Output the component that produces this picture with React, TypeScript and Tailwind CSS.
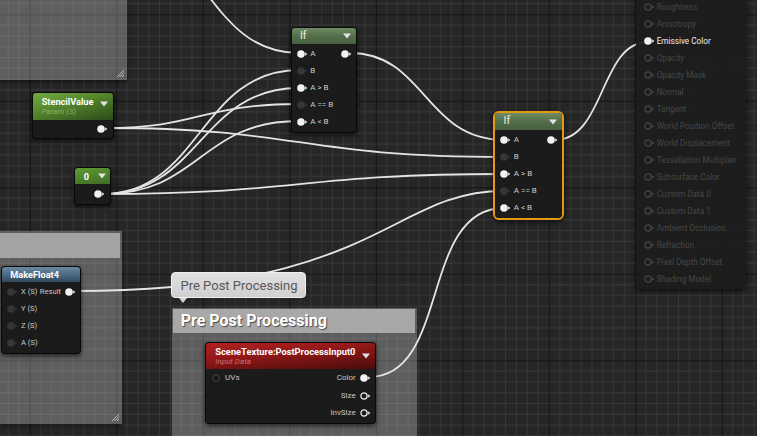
import React from 'react';

type PinKind = 'on' | 'off' | 'hollow' | 'mat' | 'uv';

const Pin = ({ kind }: { kind: PinKind }) => {
  const fill = kind === 'on' ? '#f2f2f2' : kind === 'off' ? '#363636' : 'none';
  const stroke = kind === 'hollow' ? '#e6e6e6' : kind === 'mat' ? '#464646' : kind === 'uv' ? '#3a3a3a' : 'none';
  const arrow = kind === 'on' || kind === 'hollow' ? '#f2f2f2' : kind === 'mat' ? '#464646' : kind === 'off' ? '#363636' : 'none';
  return (
    <svg width="12" height="8" viewBox="0 0 12 8" className="shrink-0">
      {kind === 'on' || kind === 'off' ? (
        <circle cx="4" cy="4" r="3.8" fill={fill} />
      ) : (
        <circle cx="4" cy="4" r="3.1" fill={kind === 'uv' ? '#161616' : 'none'} stroke={stroke} strokeWidth="1.3" />
      )}
      <path d="M8.2 2.3 L10.3 4 L8.2 5.7 Z" fill={arrow} />
    </svg>
  );
};

const Drop = () => (
  <svg width="8" height="6" viewBox="0 0 8 6" className="shrink-0">
    <path d="M0 0.5 H8 L4 5.5 Z" fill="#e2e2e2" />
  </svg>
);

const Grip = () => (
  <svg width="10" height="10" viewBox="0 0 10 10" className="absolute right-[2px] bottom-[2px]">
    <path d="M9 2 L2 9 M9 4.5 L4.5 9 M9 7 L7 9" stroke="#c8c8c8" strokeWidth="0.9" />
  </svg>
);

const ifRows = [
  { label: 'A', kind: 'on' as PinKind, out: true },
  { label: 'B', kind: 'off' as PinKind },
  { label: 'A > B', kind: 'on' as PinKind },
  { label: 'A == B', kind: 'off' as PinKind },
  { label: 'A < B', kind: 'on' as PinKind },
];

const IfBody = ({ header }: { header: string }) => (
  <>
    <div className={`flex items-center justify-between pl-[8.3px] pr-[5.3px] ${header} bg-[linear-gradient(180deg,#6f8c63_0%,#56714c_45%,#465f3f_100%)]`}>
      <span className="text-[10.5px] text-[#f0f0f0] leading-none">If</span>
      <Drop />
    </div>
    <div className="pt-[1.5px] pb-px">
      {ifRows.map((r) => (
        <div key={r.label} className="flex items-center h-[17px] pl-[5px] pr-[3.3px]">
          <Pin kind={r.kind} />
          <span className="ml-[1.5px] text-[8px] text-[#cfcfcf] leading-none">{r.label}</span>
          {r.out && (
            <span className="ml-auto">
              <Pin kind="on" />
            </span>
          )}
        </div>
      ))}
    </div>
  </>
);

const matRows = [
  'Roughness',
  'Anisotropy',
  'Emissive Color',
  'Opacity',
  'Opacity Mask',
  'Normal',
  'Tangent',
  'World Position Offset',
  'World Displacement',
  'Tessellation Multiplier',
  'Subsurface Color',
  'Custom Data 0',
  'Custom Data 1',
  'Ambient Occlusion',
  'Refraction',
  'Pixel Depth Offset',
  'Shading Model',
];

const wires = [
  'M 110 -70 C 205 -70, 205 53, 299 53',
  'M 103 194 C 200 194, 200 70, 299 70',
  'M 103 194 C 200 194, 200 88, 299 88',
  'M 106 128 C 200 128, 200 104, 299 104',
  'M 103 194 C 200 194, 200 121, 299 121',
  'M 106 128 C 300 128, 300 157, 504 157',
  'M 103 194 C 300 194, 300 174, 504 174',
  'M 350 53 C 425 53, 425 140, 504 140',
  'M 74 291 C 380 291, 390 191, 504 191',
  'M 369 377 C 450 377, 420 208, 504 208',
  'M 555 140 C 605 140, 600 42, 648 42',
];

const nodeBox = 'absolute rounded-[4px] overflow-hidden bg-[#1a1b1a] border border-black/70 shadow-[0_2px_5px_rgba(0,0,0,0.65)]';

export default function App() {
  const minor = Array.from({ length: 7 }, (_, i) => (i + 1) * 10.8125);
  return (
    <div className="relative w-[757px] h-[436px] overflow-hidden bg-[#262626] font-['Roboto',sans-serif]">
      {/* grid */}
      <svg className="absolute inset-0" width="757" height="436">
        <defs>
          <pattern id="grid" x="29.8" y="14.3" width="86.5" height="86.5" patternUnits="userSpaceOnUse">
            <rect width="86.5" height="86.5" fill="#262626" />
            {minor.map((m) => (
              <g key={m}>
                <line x1={m} y1="0" x2={m} y2="86.5" stroke="#373737" strokeWidth="1" />
                <line x1="0" y1={m} x2="86.5" y2={m} stroke="#373737" strokeWidth="1" />
              </g>
            ))}
            <line x1="0.5" y1="0" x2="0.5" y2="86.5" stroke="#141414" strokeWidth="1" />
            <line x1="0" y1="0.5" x2="86.5" y2="0.5" stroke="#141414" strokeWidth="1" />
          </pattern>
        </defs>
        <rect width="757" height="436" fill="url(#grid)" />
      </svg>

      {/* comment boxes */}
      <div className="absolute left-0 top-0 w-[127px] h-[80px] bg-[rgba(255,255,255,0.26)] shadow-[0_2px_4px_rgba(0,0,0,0.5)]">
        <Grip />
      </div>
      <div className="absolute left-0 top-[231px] w-[122px] h-[193px] bg-[rgba(255,255,255,0.26)] shadow-[0_2px_4px_rgba(0,0,0,0.5)]">
        <div className="mt-[2px] mr-[2px] h-[25px] bg-[#a3a3a3]" />
        <Grip />
      </div>
      <div className="absolute left-[171.7px] top-[307.7px] w-[245px] h-[140px] bg-[rgba(255,255,255,0.26)]">
        <div className="mx-[1.5px] mt-[1.5px] h-[24px] bg-[#a8a8a8] flex items-center pl-[7.5px]">
          <span className="text-[16px] font-bold text-white leading-none [text-shadow:1px_1px_1px_rgba(0,0,0,0.55)]">
            Pre Post Processing
          </span>
        </div>
      </div>

      {/* wires */}
      <svg className="absolute inset-0 pointer-events-none" width="757" height="436">
        {wires.map((d) => (
          <path key={d} d={d} fill="none" stroke="#e4e4e4" strokeWidth="1.8" />
        ))}
      </svg>

      {/* StencilValue */}
      <div className={`${nodeBox} left-[32.3px] top-[92.3px] w-[82px]`}>
        <div className="relative h-[26.7px] pl-[8.4px] pt-[3px] bg-[linear-gradient(165deg,#72aa40_0%,#56892d_40%,#2c4a1b_100%)]">
          <div className="text-[9.2px] font-bold text-white leading-[11px]">StencilValue</div>
          <div className="text-[8px] italic text-[#86ad63] leading-[10px]">Param (3)</div>
          <span className="absolute right-[5.3px] top-[8px]">
            <Drop />
          </span>
        </div>
        <div className="h-[17.7px] flex items-center justify-end pr-[4.6px]">
          <Pin kind="on" />
        </div>
      </div>

      {/* 0 constant */}
      <div className={`${nodeBox} left-[74.3px] top-[167.3px] w-[36.7px]`}>
        <div className="h-[16px] flex items-center justify-between pl-[8.5px] pr-[3.5px] bg-[linear-gradient(170deg,#5f9a33_0%,#3f6d24_100%)]">
          <span className="text-[9.2px] font-bold text-white leading-none">0</span>
          <Drop />
        </div>
        <div className="h-[19.4px] flex items-center justify-end pr-[4px]">
          <Pin kind="on" />
        </div>
      </div>

      {/* If 1 */}
      <div className={`${nodeBox} left-[290.7px] top-[26.7px] w-[66.6px]`}>
        <IfBody header="h-[16.6px]" />
      </div>

      {/* If 2 (selected) */}
      <div className="absolute left-[493.3px] top-[111px] w-[70.7px] rounded-[6px] border-2 border-[#e29a12] shadow-[0_2px_5px_rgba(0,0,0,0.65)]">
        <div className="rounded-[4px] overflow-hidden bg-[#1a1b1a]">
          <IfBody header="h-[17px]" />
        </div>
      </div>

      {/* Material result */}
      <div className="absolute left-[635.7px] top-[-10px] w-[110px] pt-[8.8px] pb-[1.2px] rounded-[4px] bg-[#1b1c1b]/95 shadow-[0_2px_5px_rgba(0,0,0,0.65)]">
        {matRows.map((m) => {
          const on = m === 'Emissive Color';
          return (
            <div key={m} className="flex items-center h-[17px] pl-[8.6px]">
              <Pin kind={on ? 'on' : 'mat'} />
              <span className={`ml-[0.4px] text-[8.2px] leading-none whitespace-nowrap ${on ? 'text-[#f0f0f0]' : 'text-[#474747]'}`}>
                {m}
              </span>
            </div>
          );
        })}
      </div>

      {/* MakeFloat4 */}
      <div className={`${nodeBox} left-[1px] top-[265.7px] w-[80px]`}>
        <div className="h-[15.3px] flex items-center pl-[8.3px] bg-[linear-gradient(180deg,#6a8aa3_0%,#4c6a82_50%,#314a5c_100%)]">
          <span className="text-[9.2px] font-bold text-white leading-none">MakeFloat4</span>
        </div>
        <div className="pt-[1.5px] pb-[1.2px]">
          {['X (S)', 'Y (S)', 'Z (S)', 'A (S)'].map((l, i) => (
            <div key={l} className="flex items-center h-[17px] pl-[5.3px] pr-[3px]">
              <Pin kind="off" />
              <span className="ml-[1.7px] text-[7.6px] text-[#c8c8c8] leading-none whitespace-nowrap">{l}</span>
              {i === 0 && (
                <>
                  <span className="ml-auto mr-[4px] text-[7.6px] text-[#c8c8c8] leading-none">Result</span>
                  <Pin kind="on" />
                </>
              )}
            </div>
          ))}
        </div>
      </div>

      {/* SceneTexture */}
      <div className={`${nodeBox} left-[205.3px] top-[341.7px] w-[170.7px]`}>
        <div className="relative h-[26px] pl-[9px] pt-[3px] bg-[linear-gradient(175deg,#b02222_0%,#8e1717_45%,#4a0c0c_100%)]">
          <div className="text-[9.3px] font-bold text-white leading-[11px]">SceneTexture:PostProcessInput0</div>
          <div className="text-[8px] italic text-[#d06a6a] leading-[10px]">Input Data</div>
          <span className="absolute right-[4.7px] top-[10px]">
            <Drop />
          </span>
        </div>
        <div className="pt-px pb-[1.1px]">
          {[
            { l: 'Color', k: 'on' as PinKind, uv: true },
            { l: 'Size', k: 'hollow' as PinKind },
            { l: 'InvSize', k: 'hollow' as PinKind },
          ].map((r) => (
            <div key={r.l} className="flex items-center h-[17.3px] pl-[5.3px] pr-[3.3px]">
              {r.uv && (
                <>
                  <Pin kind="uv" />
                  <span className="ml-[1.5px] text-[8px] text-[#c8c8c8] leading-none">UVs</span>
                </>
              )}
              <span className="ml-auto mr-[4px] text-[8px] text-[#c8c8c8] leading-none">{r.l}</span>
              <Pin kind={r.k} />
            </div>
          ))}
        </div>
      </div>

      {/* comment bubble */}
      <div className="absolute left-[171px] top-[272.3px] w-[134.7px] h-[26px] rounded-[4px] border border-[#efefef] bg-[linear-gradient(180deg,#e0e0e0,#d0d0d0)] flex items-center pl-[8.5px]">
        <span className="text-[13px] text-[#585858] leading-none whitespace-nowrap">Pre Post Processing</span>
        <svg width="8" height="6" viewBox="0 0 8 6" className="absolute left-[7px] top-[25px]">
          <path d="M0 0 H8 L4 5 Z" fill="#d2d2d2" />
        </svg>
      </div>
    </div>
  );
}
